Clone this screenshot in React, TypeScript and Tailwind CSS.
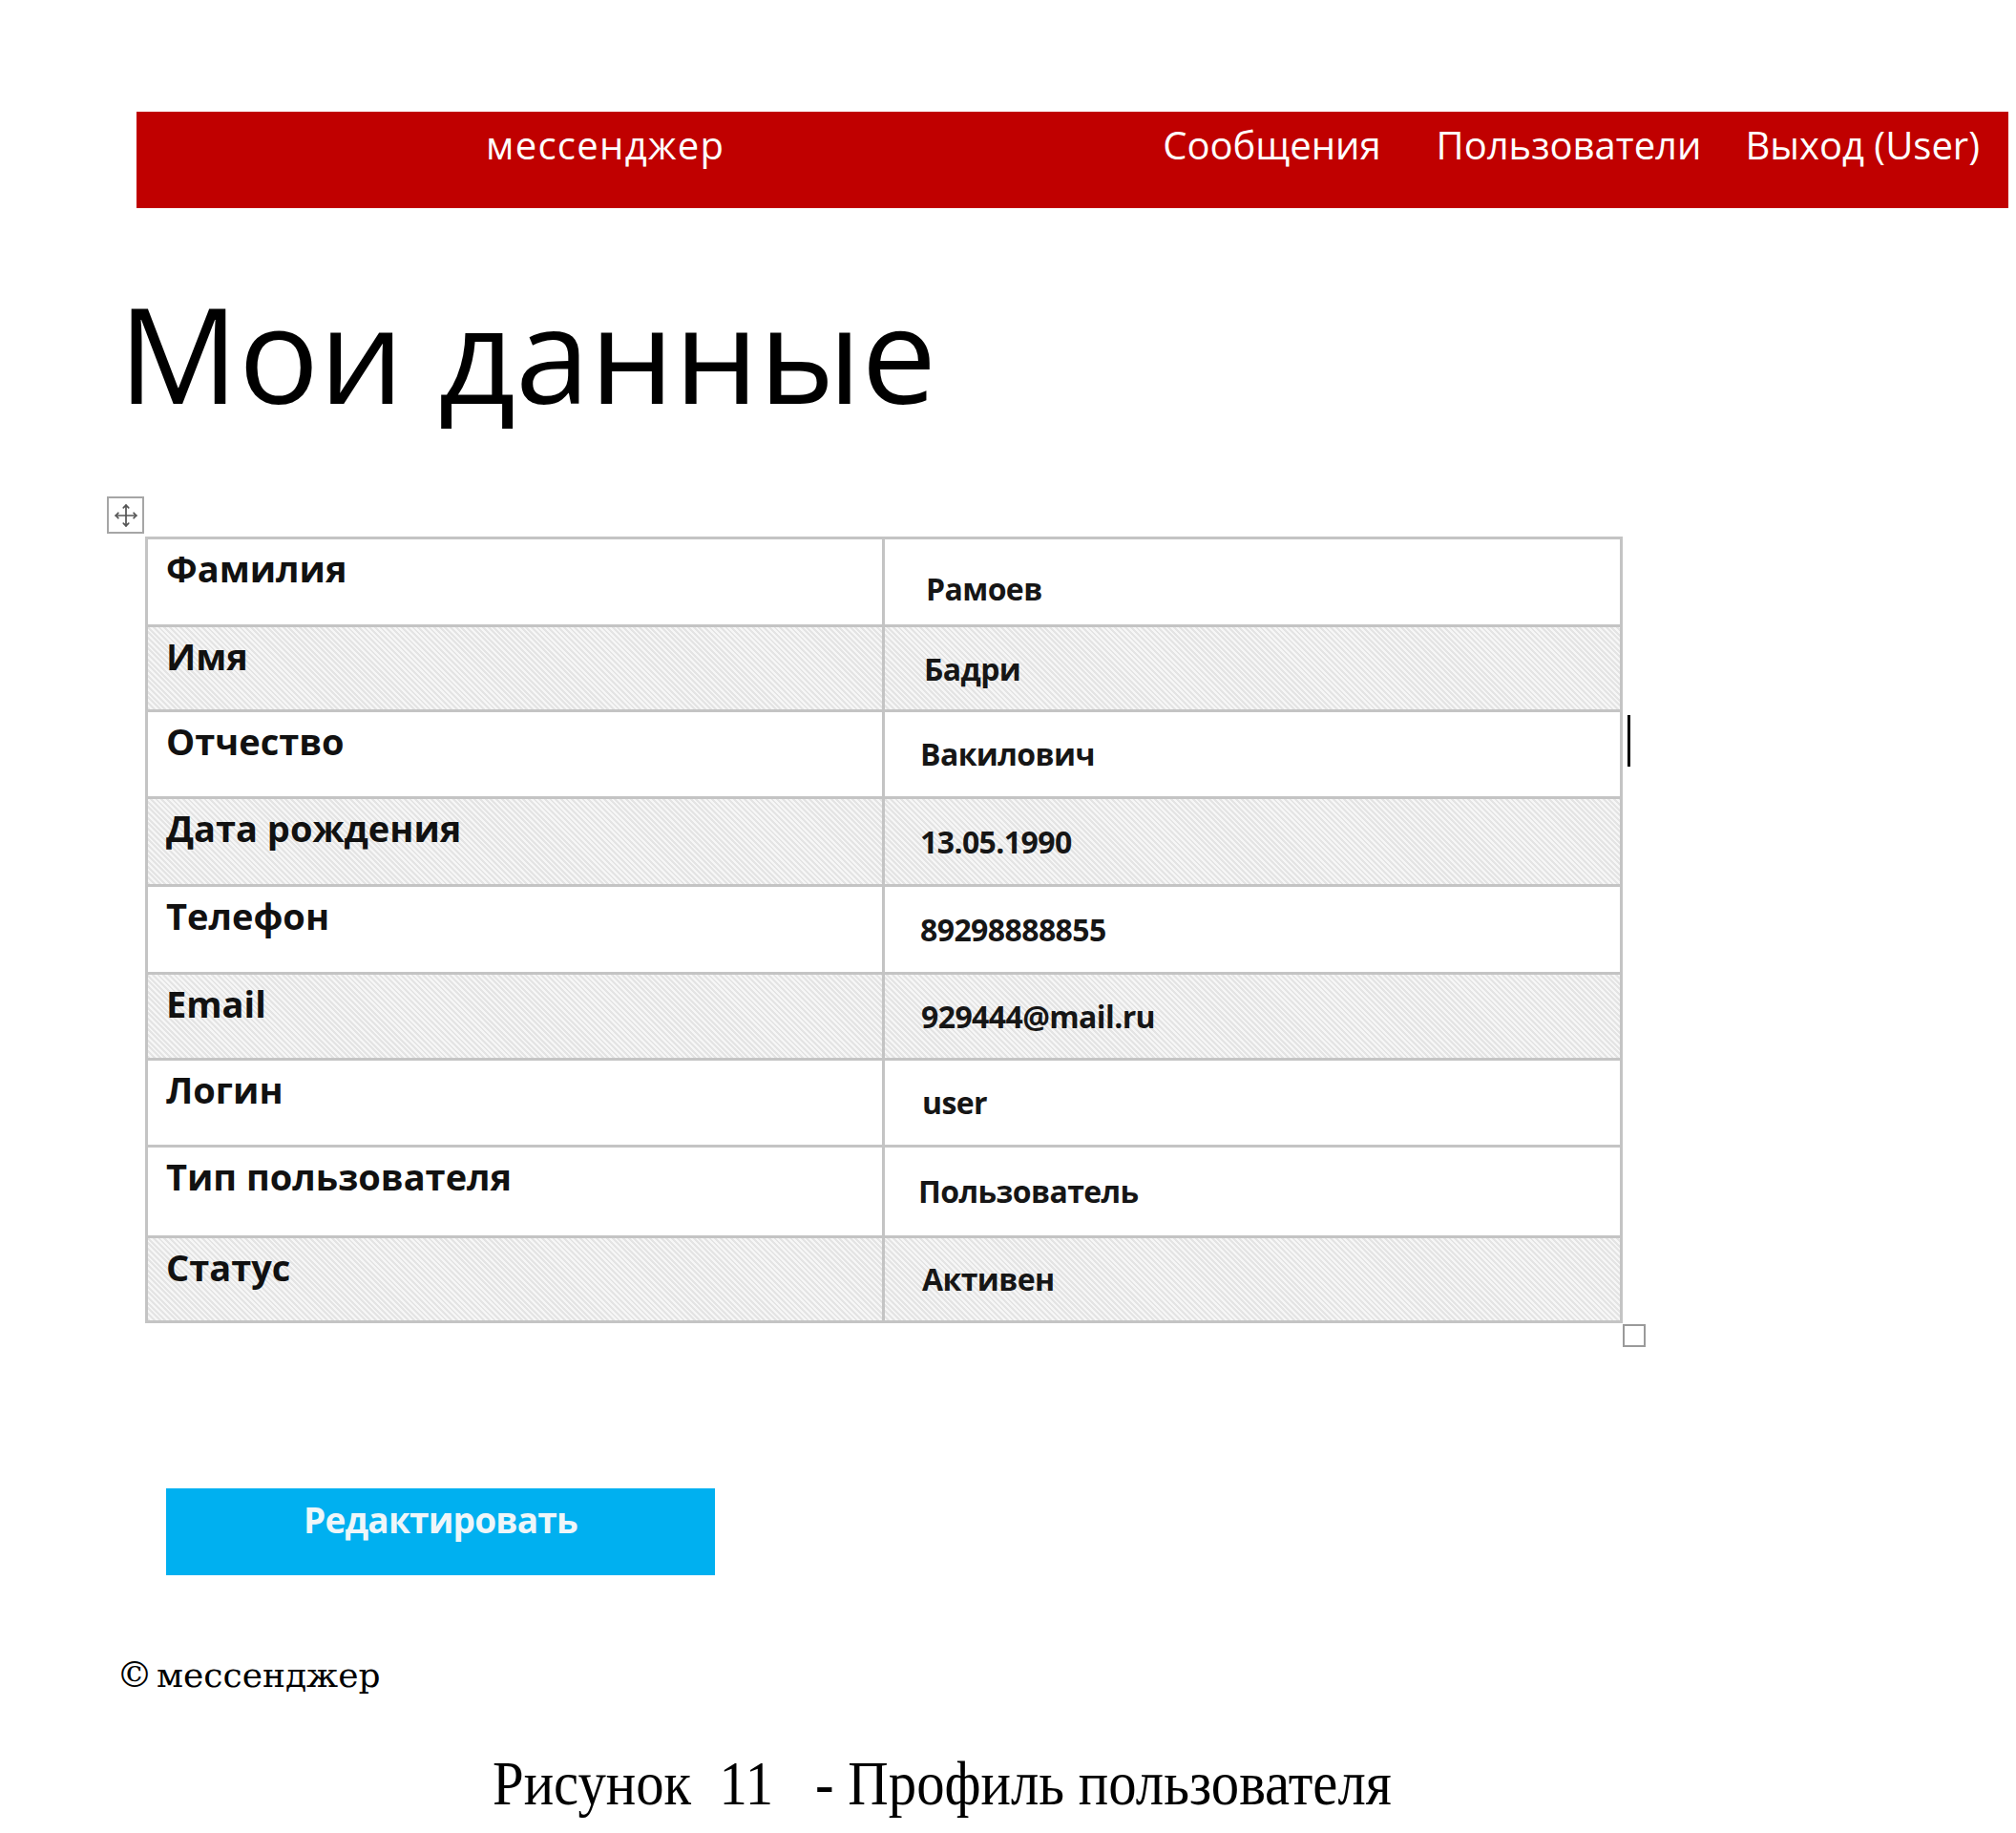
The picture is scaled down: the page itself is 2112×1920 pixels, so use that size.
import React from "react";

type Row = { label: string; value: string; h: string; shaded: boolean; vpl: string; vpt: string };

const rows: Row[] = [
  { label: "Фамилия", value: "Рамоев", h: "h-[89px]", shaded: false, vpl: "pl-[43px]", vpt: "pt-[14px]" },
  { label: "Имя", value: "Бадри", h: "h-[89px]", shaded: true, vpl: "pl-[41px]", vpt: "pt-[2px]" },
  { label: "Отчество", value: "Вакилович", h: "h-[91px]", shaded: false, vpl: "pl-[37px]", vpt: "pt-0" },
  { label: "Дата рождения", value: "13.05.1990", h: "h-[92px]", shaded: true, vpl: "pl-[37px]", vpt: "pt-0" },
  { label: "Телефон", value: "89298888855", h: "h-[92px]", shaded: false, vpl: "pl-[37px]", vpt: "pt-0" },
  { label: "Email", value: "929444@mail.ru", h: "h-[90px]", shaded: true, vpl: "pl-[38px]", vpt: "pt-0" },
  { label: "Логин", value: "user", h: "h-[91px]", shaded: false, vpl: "pl-[39px]", vpt: "pt-0" },
  { label: "Тип пользователя", value: "Пользователь", h: "h-[95px]", shaded: false, vpl: "pl-[35px]", vpt: "pt-0" },
  { label: "Статус", value: "Активен", h: "h-[89px]", shaded: true, vpl: "pl-[39px]", vpt: "pt-0" },
];

const shade =
  "bg-[repeating-linear-gradient(45deg,#e4e4e4_0px,#e4e4e4_2px,#f6f6f6_2px,#f6f6f6_4px)]";

function MoveIcon() {
  return (
    <svg width="26" height="26" viewBox="0 0 24 24" fill="none" stroke="#555" strokeWidth="1.6" strokeLinecap="round" strokeLinejoin="round">
      <path d="M12 2v20M2 12h20" />
      <path d="M9.5 4.5 12 2l2.5 2.5M9.5 19.5 12 22l2.5-2.5M4.5 9.5 2 12l2.5 2.5M19.5 9.5 22 12l-2.5 2.5" />
    </svg>
  );
}

export default function App() {
  return (
    <div className="w-[2112px] h-[1920px] bg-white flex flex-col overflow-hidden">
      {/* Header */}
      <header className="mt-[117px] ml-[143px] mr-[8px] h-[101px] bg-[#c00000] flex items-start pt-[9px] text-white font-['Open_Sans',sans-serif] font-medium text-[40px] leading-[1.3]">
        <div className="pl-[366px] tracking-[1.3px]">мессенджер</div>
        <nav className="ml-auto pr-[30px] flex">
          <span>Сообщения</span>
          <span className="ml-[58px]">Пользователи</span>
          <span className="ml-[46px]">Выход (User)</span>
        </nav>
      </header>

      {/* Title */}
      <h1 className="mt-[81px] ml-[124px] text-[140px] leading-none text-black font-['Open_Sans',sans-serif] font-normal h-[140px]">
        Мои данные
      </h1>

      {/* Table */}
      <div className="relative mt-[123px] ml-[152px] w-[1548px]">
        <div className="absolute left-[-40px] top-[-42px] w-[39px] h-[39px] border-2 border-[#a6a6a6] bg-white flex items-center justify-center">
          <MoveIcon />
        </div>
        <div className="border-[3px] border-[#c4c4c4] flex flex-col">
          {rows.map((r, i) => (
            <div
              key={r.label}
              className={`flex ${r.h} ${i > 0 ? "border-t-[3px] border-[#c4c4c4]" : ""} ${r.shaded ? shade : "bg-white"}`}
            >
              <div className="w-[772px] border-r-[3px] border-[#c4c4c4] pl-[19px] pt-[6px] font-['Open_Sans',sans-serif] font-bold text-[38px] leading-[1.3] text-[#111]">
                {r.label}
              </div>
              <div className={`flex-1 flex items-center ${r.vpl} ${r.vpt} font-['Open_Sans',sans-serif] font-bold text-[32px] tracking-[-0.6px] leading-none text-[#161616]`}>
                {r.value}
              </div>
            </div>
          ))}
        </div>
        <div className="absolute right-[-24px] bottom-[-25px] w-[24px] h-[24px] border-2 border-[#9a9a9a] bg-white" />
        <div className="absolute right-[-8px] top-[187px] w-[3px] h-[54px] bg-black" />
      </div>

      {/* Button */}
      <div className="mt-[173px] ml-[174px] w-[575px] h-[91px] bg-[#00b0f0] flex justify-center pt-[9px]">
        <span className="font-['Open_Sans',sans-serif] font-bold text-[37px] leading-[1.3] text-[#eef6f9] tracking-[-0.8px]">
          Редактировать
        </span>
      </div>

      {/* Footer */}
      <div className="mt-[82px] ml-[122px] font-['DejaVu_Serif',serif] text-[36px] leading-[1.2] text-black flex items-baseline">
        <span className="text-[38px]">©</span>
        <span className="ml-[4px]">мессенджер</span>
      </div>

      {/* Caption */}
      <div className="mt-[54px] ml-[516px] font-['Liberation_Serif',serif] text-[66px] leading-[1.1] text-black whitespace-pre origin-left scale-x-[0.89]">
        {"Рисунок  11   - Профиль пользователя"}
      </div>
    </div>
  );
}
